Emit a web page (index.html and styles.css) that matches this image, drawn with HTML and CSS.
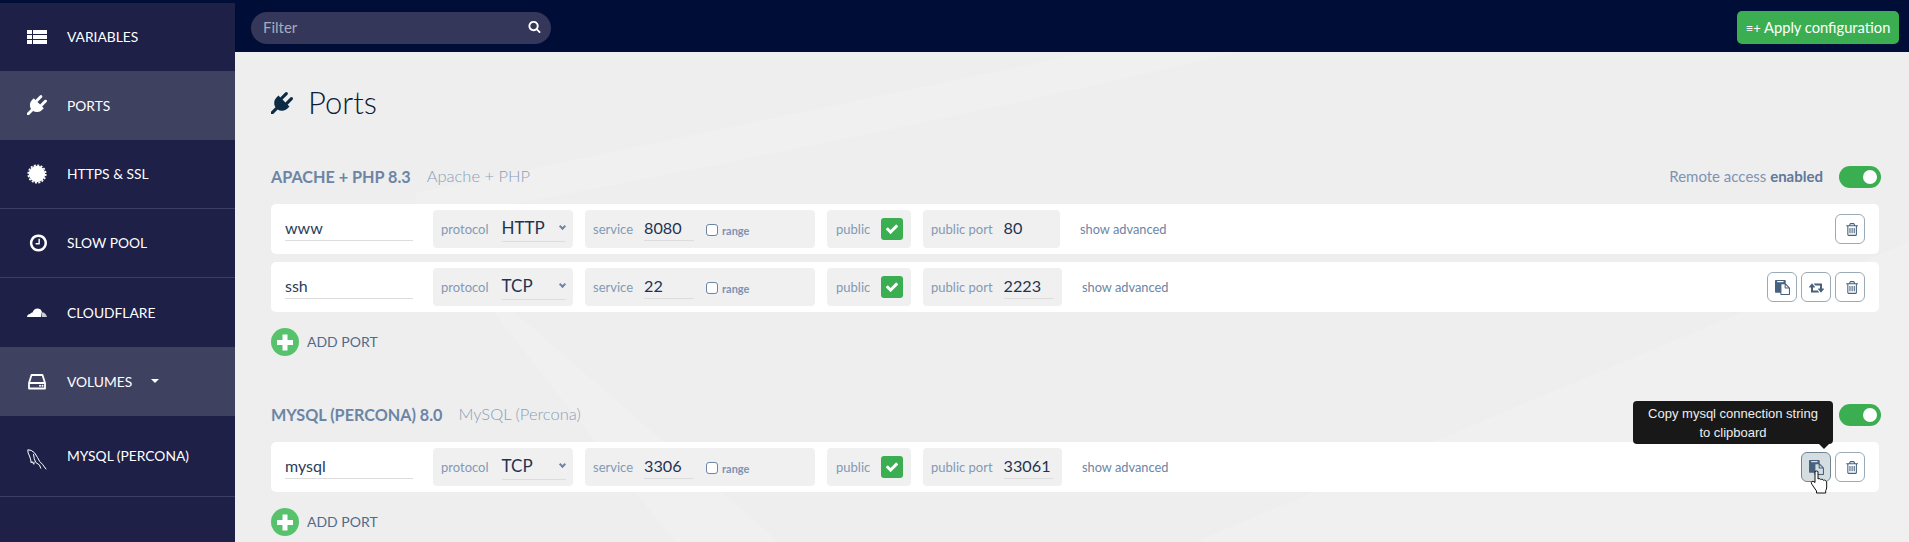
FILE: index.html
```html
<!DOCTYPE html>
<html lang="en">
<head>
    <meta charset="UTF-8">
    <title>Ports</title>
    <link rel="stylesheet" href="styles.css">
</head>
<body>
    <svg class="sprite" aria-hidden="true">
        <symbol id="i-trash" viewBox="0 0 1408 1792"><path d="M704 736v576q0 14-9 23t-23 9h-64q-14 0-23-9t-9-23v-576q0-14 9-23t23-9h64q14 0 23 9t9 23zm256 0v576q0 14-9 23t-23 9h-64q-14 0-23-9t-9-23v-576q0-14 9-23t23-9h64q14 0 23 9t9 23zm256 0v576q0 14-9 23t-23 9h-64q-14 0-23-9t-9-23v-576q0-14 9-23t23-9h64q14 0 23 9t9 23zm128 724v-948h-896v948q0 22 7 40.5t14.5 27 10.5 8.5h832q3 0 10.5-8.5t14.5-27 7-40.5zm-672-1076h448l-48-117q-7-9-17-11h-317q-10 2-17 11zm928 32v64q0 14-9 23t-23 9h-96v948q0 83-47 143.5t-113 60.5h-832q-66 0-113-58.5t-47-141.5v-952h-96q-14 0-23-9t-9-23v-64q0-14 9-23t23-9h309l70-167q15-37 54-63t79-26h320q40 0 79 26t54 63l70 167h309q14 0 23 9t9 23z"/></symbol>
        <symbol id="i-paste" viewBox="0 0 1792 1792"><path d="M768 1664h896v-640h-416q-40 0-68-28t-28-68v-416h-384v1152zm256-1440v-64q0-13-9.5-22.5t-22.5-9.5h-704q-13 0-22.5 9.5t-9.5 22.5v64q0 13 9.5 22.5t22.5 9.5h704q13 0 22.5-9.5t9.5-22.5zm256 672h299l-299-299v299zm512 128v672q0 40-28 68t-68 28h-960q-40 0-68-28t-28-68v-160h-544q-40 0-68-28t-28-68v-1344q0-40 28-68t68-28h1088q40 0 68 28t28 68v328q21 13 36 28l408 408q28 28 48 76t20 88z"/></symbol>
        <symbol id="i-retweet" viewBox="0 0 1920 1792"><path d="M1280 1504q0 13-9.5 22.5t-22.5 9.5h-960q-8 0-13.5-2t-9-7-5.5-8-3-11.5-1-11.5v-600h-192q-26 0-45-19t-19-45q0-24 15-41l320-384q19-22 49-22t49 22l320 384q15 17 15 41 0 26-19 45t-45 19h-192v384h576q16 0 25 11l160 192q7 10 7 21zm640-416q0 24-15 41l-320 384q-20 23-49 23t-49-23l-320-384q-15-17-15-41 0-26 19-45t45-19h192v-384h-576q-16 0-25-12l-160-192q-7-9-7-20 0-13 9.5-22.5t22.5-9.5h960q8 0 13.5 2t9 7 5.5 8 3 11.5 1 11.5v600h192q26 0 45 19t19 45z"/></symbol>
        <symbol id="i-check" viewBox="0 0 1792 1792"><path d="M1671 566q0 40-28 68l-724 724-136 136q-28 28-68 28t-68-28l-136-136-362-362q-28-28-28-68t28-68l136-136q28-28 68-28t68 28l294 295 656-657q28-28 68-28t68 28l136 136q28 28 28 68z"/></symbol>
        <symbol id="i-plug" viewBox="0 0 1792 1792"><path d="M1755 453q37 38 37 90.5t-37 90.5l-401 400 150 150-160 160q-163 163-389.5 186.5t-411.5-100.5l-362 362h-181v-181l362-362q-124-185-100.5-411.5t186.5-389.5l160-160 150 150 400-401q38-37 91-37t90 37 37 90.5-37 90.5l-400 401 234 234 401-400q38-37 91-37t90 37z"/></symbol>
    </svg>

    <aside class="sidebar">
        <a class="nav-item">
            <svg class="nav-icon" viewBox="0 0 20 16"><path d="M0 1h5v4H0zM6 1h14v4H6zM0 6h5v4H0zM6 6h14v4H6zM0 11h5v4H0zM6 11h14v4H6z"/></svg>
            <span>Variables</span>
        </a>
        <a class="nav-item active">
            <svg class="nav-icon"><use href="#i-plug"/></svg>
            <span>Ports</span>
        </a>
        <a class="nav-item line">
            <svg class="nav-icon" viewBox="0 0 20 20"><circle cx="10" cy="10" r="8.2"/><circle class="teeth" cx="10" cy="10" r="8.8"/></svg>
            <span>HTTPS &amp; SSL</span>
        </a>
        <a class="nav-item line">
            <svg class="nav-icon" viewBox="0 0 1536 1792"><path d="M1024 544v448q0 14-9 23t-23 9h-320q-14 0-23-9t-9-23v-64q0-14 9-23t23-9h224v-352q0-14 9-23t23-9h64q14 0 23 9t9 23zm416 352q0-148-73-273t-198-198-273-73-273 73-198 198-73 273 73 273 198 198 273 73 273-73 198-198 73-273zm224 0q0 209-103 385.5t-279.5 279.5-385.5 103-385.5-103-279.5-279.5-103-385.5 103-385.5 279.5-279.5 385.5-103 385.5 103 279.5 279.5 103 385.5z"/></svg>
            <span>Slow pool</span>
        </a>
        <a class="nav-item">
            <svg class="nav-icon" viewBox="0 0 20 10"><path d="M0 10q.2-2.6 3-2.9Q4 5.400 5.500 5.600 7 1.500 10.500 1.500q3.300 0 4.400 3.300L13.800 10z"/><path class="dim" d="M14.700 5.200Q18.800 5.300 20 10h-5.300z"/></svg>
            <span>Cloudflare</span>
        </a>
        <a class="nav-item active">
            <svg class="nav-icon" viewBox="0 0 20 20"><path class="outline" d="M2 12l2.500-8h11l2.500 8v5.500H2z M2 12h16"/><circle cx="13" cy="14.800" r="1"/><circle cx="15.500" cy="14.800" r="1"/></svg>
            <span>Volumes</span>
            <i class="caret"></i>
        </a>
        <a class="nav-item tall line">
            <svg class="nav-icon" viewBox="0 0 20 21"><path class="outline thin" d="M.8.800l3.400.6Q8 3 10.500 8.500q1.800 4.500 5 6.800l3.700 5M.8.800Q.6 4 2.500 7q1.300 3 1.700 6.800l.8-1.300 1.800 2.800.4-2.500M6.500 5q.3 5 2.300 8.500l3.700 2.500 1.300 3.500"/></svg>
            <span>MySQL (Percona)</span>
        </a>
    </aside>

    <div class="main">
        <header class="topbar">
            <div class="filter">
                <span>Filter</span>
                <svg viewBox="0 0 1792 1792"><path d="M1216 832q0-185-131.500-316.500t-316.500-131.500-316.500 131.500-131.500 316.500 131.500 316.500 316.500 131.500 316.500-131.500 131.500-316.500zm512 832q0 52-38 90t-90 38q-54 0-90-38l-343-342q-179 124-399 124-143 0-273.500-55.500t-225-150-150-225-55.500-273.500 55.500-273.500 150-225 225-150 273.500-55.500 273.500 55.500 225 150 150 225 55.500 273.500q0 220-124 399l343 343q37 37 37 90z"/></svg>
            </div>
            <button class="apply-btn"><span class="apply-mark">≡+</span> Apply configuration</button>
        </header>

        <main class="content">
            <svg class="backdrop" viewBox="0 0 1674 490" preserveAspectRatio="none" aria-hidden="true">
                <path d="M181 141L854 0h150Q620 90 181 170z"/>
                <path d="M215 205L277 258 544 490H440z"/>
                <path d="M960 490L1674 190v300z"/>
            </svg>

            <h1 class="page-title"><svg><use href="#i-plug"/></svg><span>Ports</span></h1>

            <section class="service">
                <div class="service-head">
                    <h2>Apache + PHP 8.3</h2>
                    <span class="service-sub">Apache + PHP</span>
                    <span class="remote">Remote access <b>enabled</b></span>
                    <span class="toggle"></span>
                </div>
                <div class="port-row">
                    <div class="name-field">www</div>
                    <div class="group protocol"><label>protocol</label><div class="select">HTTP<i class="chevron"></i></div></div>
                    <div class="group service-port"><label>service</label><div class="value">8080</div><span class="box"></span><span class="range">range</span></div>
                    <div class="group public"><label>public</label><span class="tick"><svg><use href="#i-check"/></svg></span></div>
                    <div class="group public-port"><label>public port</label><div class="value plain">80</div></div>
                    <a class="advanced">show advanced</a>
                    <div class="actions">
                        <button class="icon-btn"><svg><use href="#i-trash"/></svg></button>
                    </div>
                </div>
                <div class="port-row">
                    <div class="name-field">ssh</div>
                    <div class="group protocol"><label>protocol</label><div class="select">TCP<i class="chevron"></i></div></div>
                    <div class="group service-port"><label>service</label><div class="value">22</div><span class="box"></span><span class="range">range</span></div>
                    <div class="group public"><label>public</label><span class="tick"><svg><use href="#i-check"/></svg></span></div>
                    <div class="group public-port wide"><label>public port</label><div class="value">2223</div></div>
                    <a class="advanced">show advanced</a>
                    <div class="actions">
                        <button class="icon-btn"><svg><use href="#i-paste"/></svg></button>
                        <button class="icon-btn"><svg><use href="#i-retweet"/></svg></button>
                        <button class="icon-btn"><svg><use href="#i-trash"/></svg></button>
                    </div>
                </div>
                <a class="add-port"><i class="plus"></i><span>Add port</span></a>
            </section>

            <section class="service">
                <div class="service-head">
                    <h2>MySQL (Percona) 8.0</h2>
                    <span class="service-sub">MySQL (Percona)</span>
                    <span class="remote">Remote access <b>enabled</b></span>
                    <span class="toggle"></span>
                </div>
                <div class="port-row">
                    <div class="name-field">mysql</div>
                    <div class="group protocol"><label>protocol</label><div class="select">TCP<i class="chevron"></i></div></div>
                    <div class="group service-port"><label>service</label><div class="value">3306</div><span class="box"></span><span class="range">range</span></div>
                    <div class="group public"><label>public</label><span class="tick"><svg><use href="#i-check"/></svg></span></div>
                    <div class="group public-port wide"><label>public port</label><div class="value">33061</div></div>
                    <a class="advanced">show advanced</a>
                    <div class="actions">
                        <button class="icon-btn hover">
                            <svg><use href="#i-paste"/></svg>
                            <span class="tooltip">Copy mysql connection string to clipboard</span>
                            <svg class="cursor" viewBox="0 0 18 24"><path d="M5 1.500q1.500-1 3 0V9q1-1 2.200 0 .3.200.5.600 1-.8 2.200 0l.5.700q1.200-.6 2.300.3 1 1 1 2.400v4q0 2.500-1 3.500v2.500H6.500v-2L2 14.500q-1.600-2 0-3 1-.7 3 1z"/></svg>
                        </button>
                        <button class="icon-btn"><svg><use href="#i-trash"/></svg></button>
                    </div>
                </div>
                <a class="add-port"><i class="plus"></i><span>Add port</span></a>
            </section>
        </main>
    </div>
</body>
</html>
```

FILE: styles.css
```css
* {
    margin: 0;
    padding: 0;
    box-sizing: border-box;
}

html, body {
    height: 542px;
    overflow: hidden;
}

body {
    display: flex;
    font-family: Lato, "Open Sans", Arial, sans-serif;
    background: #eeeeee;
    color: #1f3350;
}

.sprite {
    display: none;
}

/* sidebar */
.sidebar {
    width: 235px;
    flex: none;
    padding-top: 3px;
    background: #1e2048;
    box-shadow: inset 0 3px 0 #000d36;
    color: #fff;
}

.nav-item {
    display: flex;
    align-items: center;
    height: 69px;
    padding-left: 27px;
    padding-bottom: 1px;
    font-size: 13.800px;
    text-transform: uppercase;
}

.nav-item:first-child {
    height: 68px;
}

.nav-item.active {
    background: #3f4160;
}

.nav-item.line {
    border-bottom: 1px solid #3c3e62;
}

.nav-item.tall {
    height: 81px;
}

.nav-icon {
    width: 20px;
    height: 20px;
    margin-right: 20px;
    fill: #fff;
    flex: none;
}

.nav-icon .teeth {
    fill: none;
    stroke: #fff;
    stroke-width: 1.600;
    stroke-dasharray: 2 1.456;
}

.nav-icon .dim {
    fill: #c9cad6;
}

.nav-icon .outline {
    fill: none;
    stroke: #fff;
    stroke-width: 1.800;
    stroke-linejoin: round;
}

.nav-icon .thin {
    stroke-width: 1;
}

.tall .nav-icon {
    height: 21px;
    margin-top: 8px;
}

.caret {
    margin-left: 19px;
    border: 4px solid transparent;
    border-top: 4px solid #fff;
    border-bottom: 0;
}

/* top bar */
.main {
    flex: 1;
    min-width: 0;
    display: flex;
    flex-direction: column;
}

.topbar {
    height: 52px;
    flex: none;
    display: flex;
    align-items: center;
    justify-content: space-between;
    padding: 3px 10px 0 16px;
    background: #000d36;
}

.filter {
    width: 300px;
    height: 32px;
    padding: 0 10px 0 12px;
    display: flex;
    align-items: center;
    justify-content: space-between;
    border-radius: 16px;
    background: #34375a;
    color: #a7abbd;
    font-size: 15px;
}

.filter span {
    margin-bottom: 2px;
}

.filter svg {
    width: 13px;
    height: 13px;
    margin-bottom: 2px;
    fill: #fff;
}

.apply-btn {
    width: 162px;
    height: 33px;
    padding-bottom: 2px;
    border: 0;
    border-radius: 5px;
    background: #3cae52;
    color: #fff;
    font: 14.700px Lato, sans-serif;
}

.apply-mark {
    font-size: 13px;
}

/* content */
.content {
    position: relative;
    flex: 1;
    padding: 31px 30px 0 36px;
    overflow: hidden;
}

.backdrop {
    position: absolute;
    left: 0;
    top: 0;
    width: 100%;
    height: 100%;
    fill: #f0f0f0;
}

.page-title {
    position: relative;
    display: flex;
    align-items: center;
    height: 40px;
    font-size: 31px;
    font-weight: 300;
    color: #0c1c3c;
}

.page-title span {
    margin-top: -2px;
}

.page-title svg {
    width: 22px;
    height: 22px;
    margin-right: 15px;
    fill: #0c2a44;
}

.service {
    position: relative;
    margin-top: 48px;
}

.page-title + .service {
    margin-top: 43px;
}

.service-head {
    display: flex;
    align-items: center;
    height: 22px;
    margin-right: -2px;
    margin-bottom: 16px;
}

.service-head h2 {
    margin-bottom: 2px;
    font-size: 16.200px;
    font-weight: 700;
    text-transform: uppercase;
    color: #6c85a5;
}

.service-sub {
    margin-left: 16px;
    margin-bottom: 2px;
    font-size: 16.500px;
    font-weight: 300;
    color: #8a9eb8;
}

.remote {
    margin-left: auto;
    margin-bottom: 2px;
    font-size: 15px;
    color: #7d93b3;
}

.remote b {
    color: #60799a;
}

.toggle {
    position: relative;
    width: 42px;
    height: 22px;
    margin-left: 16px;
    border-radius: 11px;
    background: #3cae52;
}

.toggle::after {
    content: "";
    position: absolute;
    right: 4px;
    top: 4px;
    width: 14px;
    height: 14px;
    border-radius: 50%;
    background: #fff;
}

.port-row {
    display: flex;
    align-items: center;
    height: 50px;
    margin-bottom: 8px;
    padding: 0 14px;
    border-radius: 5px;
    background: #fff;
}

.name-field {
    width: 128px;
    height: 24px;
    margin-right: 20px;
    border-bottom: 1px solid #ddd;
    font-size: 16px;
    line-height: 22px;
    color: #2a3d5a;
}

.group {
    display: flex;
    align-items: center;
    height: 38px;
    margin-right: 12px;
    border-radius: 4px;
    background: #f0f0f0;
    font-size: 13px;
    color: #8399b5;
}

.group label {
    flex: none;
}

.protocol {
    width: 140px;
    padding-left: 8px;
}

.select {
    position: relative;
    width: 64px;
    height: 25px;
    margin-left: 13px;
    border-bottom: 1px solid #ddd;
    font-size: 17px;
    line-height: 22px;
    color: #1f3350;
}

.chevron {
    position: absolute;
    right: 1px;
    top: 7px;
    width: 5px;
    height: 5px;
    border: solid #6c85a5;
    border-width: 0 2px 2px 0;
    transform: rotate(45deg);
}

.service-port {
    width: 230px;
    padding-left: 8px;
}

.value {
    width: 50px;
    height: 24px;
    margin-left: 11px;
    border-bottom: 1px solid #ddd;
    font-size: 16.200px;
    line-height: 22px;
    color: #1f3350;
}

.value.plain {
    border-bottom: 0;
}

.box {
    width: 12px;
    height: 12px;
    margin: 2px 0 0 12px;
    border: 1px solid #6c85a5;
    border-radius: 3px;
    background: #fff;
}

.range {
    margin: 2px 0 0 4px;
    font-size: 11px;
    font-weight: 700;
    color: #7d93b3;
}

.public {
    width: 84px;
    padding-left: 9px;
    justify-content: space-between;
    padding-right: 8px;
}

.tick {
    width: 22px;
    height: 22px;
    display: flex;
    align-items: center;
    justify-content: center;
    border-radius: 3px;
    background: #3cae52;
}

.tick svg {
    width: 14px;
    height: 14px;
    fill: #fff;
}

.public-port {
    width: 137px;
    padding-left: 8px;
}

.public-port.wide {
    width: 139px;
}

.advanced {
    margin-left: 8px;
    font-size: 12.800px;
    color: #6c85a5;
}

.actions {
    margin-left: auto;
    display: flex;
    gap: 4px;
}

.icon-btn {
    position: relative;
    width: 30px;
    height: 30px;
    display: flex;
    align-items: center;
    justify-content: center;
    border: 1px solid #9aaab6;
    border-radius: 6px;
    background: #fff;
}

.icon-btn > svg {
    width: 15px;
    height: 15px;
    fill: #46627e;
}

.icon-btn.hover {
    background: #d6dde0;
    border-color: #6f8795;
}

.tooltip {
    position: absolute;
    right: -3px;
    bottom: 37px;
    width: 200px;
    padding: 3px 12px 2px;
    border-radius: 4px;
    background: #181818;
    color: #eee;
    font: 13px/19px "Liberation Sans", Arial, sans-serif;
    text-align: center;
}

.tooltip::after {
    content: "";
    position: absolute;
    right: 4px;
    bottom: -5px;
    border: 5px solid transparent;
    border-top-color: #181818;
    border-bottom: 0;
}

.icon-btn > svg.cursor {
    position: absolute;
    left: 8px;
    top: 17px;
    width: 18px;
    height: 24px;
    fill: #fff;
    stroke: #111;
    stroke-width: 1;
}

.add-port {
    display: flex;
    align-items: center;
    height: 28px;
    margin-top: 16px;
    font-size: 14px;
    text-transform: uppercase;
    color: #526a8a;
}

.add-port span {
    margin-bottom: 2px;
}

.plus {
    position: relative;
    width: 28px;
    height: 28px;
    margin-right: 8px;
    border-radius: 50%;
    background: #56c36c;
}

.plus::before,
.plus::after {
    content: "";
    position: absolute;
    left: 6px;
    top: 11.500px;
    width: 16px;
    height: 5px;
    background: #fff;
}

.plus::after {
    transform: rotate(90deg);
}
```
